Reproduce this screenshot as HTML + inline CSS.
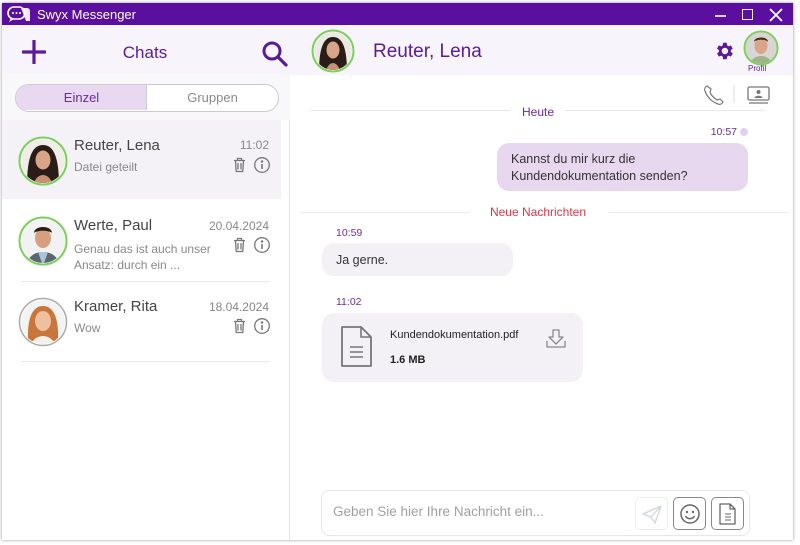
<!DOCTYPE html>
<html><head><meta charset="utf-8"><style>
*{margin:0;padding:0;box-sizing:border-box}
body{width:800px;height:545px;background:#fff;font-family:"Liberation Sans",sans-serif;position:relative;overflow:hidden}
.a{position:absolute}
.win{left:2px;top:3px;width:791px;height:537px;background:#fff;box-shadow:0 0 3px rgba(0,0,0,.45);overflow:hidden}
.t{white-space:nowrap}
</style></head><body>
<div class="a win">
 <div class="a" style="left:0;top:0;width:791px;height:22px;background:#5b0f9f"></div>
 <svg class="a" style="left:5px;top:3px" width="24" height="17" viewBox="0 0 24 17"><path d="M14 2h6a3 3 0 0 1 3 3v10h-4z" fill="#fff" opacity=".9"/><rect x="1" y="1" width="17" height="12" rx="6" fill="none" stroke="#fff" stroke-width="1.6"/><path d="M4 12l-2 4 5-3" fill="#fff"/><circle cx="6" cy="7" r="1" fill="#fff"/><circle cx="9.5" cy="7" r="1" fill="#fff"/><circle cx="13" cy="7" r="1" fill="#fff"/></svg>
 <div class="a t" style="left:35px;top:4px;color:#fff;font-size:13px">Swyx Messenger</div>
 <div class="a" style="left:713px;top:12px;width:11px;height:1.5px;background:#fff;opacity:.8"></div>
 <div class="a" style="left:740px;top:6px;width:11px;height:11px;border:1.5px solid #fff;opacity:.9"></div>
 <svg class="a" style="left:767px;top:5px" width="14" height="14"><path d="M1 1L13 13M13 1L1 13" stroke="#fff" stroke-width="1.8"/></svg>
 <!-- header -->
 <div class="a" style="left:0;top:22px;width:791px;height:50px;background:#f8f4fc"></div>
 <svg class="a" style="left:20px;top:37px" width="24" height="24"><path d="M12 1V23M1 12H23" stroke="#5a1a9a" stroke-width="3.2" stroke-linecap="round"/></svg>
 <div class="a t" style="left:100px;top:40px;width:86px;text-align:center;color:#5a1a9a;font-size:17px">Chats</div>
 <svg class="a" style="left:259px;top:37px" width="28" height="28"><circle cx="11" cy="11" r="8" fill="none" stroke="#5a1a9a" stroke-width="3"/><path d="M17 17L25 25" stroke="#5a1a9a" stroke-width="3.2" stroke-linecap="round"/></svg>
 <svg class="a" style="left:309px;top:26px" width="44" height="44"><defs><clipPath id="c1"><circle cx="22" cy="22" r="19"/></clipPath></defs><circle cx="22" cy="22" r="20.5" fill="#fff" stroke="#7ccf5a" stroke-width="2"/><g clip-path="url(#c1)"><rect width="44" height="44" fill="#ede9e4"/><path d="M8 44C8 20 12 8 22 8S36 20 36 44Z" fill="#2a1d18"/><ellipse cx="22" cy="21" rx="6.5" ry="8.5" fill="#d9a58a"/><path d="M14 44c2-8 6-10 8-10s6 2 8 10z" fill="#c98f75"/></g></svg>
 <div class="a t" style="left:371px;top:38px;color:#5a1a9a;font-size:19px">Reuter, Lena</div>
 <svg class="a" style="left:711px;top:37px" width="22" height="22" viewBox="0 0 24 24"><path fill="#5a1a9a" d="M19.4 13a7.5 7.5 0 0 0 0-2l2.1-1.6-2-3.5-2.5 1a7 7 0 0 0-1.7-1L15 3h-4l-.4 2.9a7 7 0 0 0-1.7 1l-2.5-1-2 3.5L6.5 11a7.5 7.5 0 0 0 0 2l-2.1 1.6 2 3.5 2.5-1a7 7 0 0 0 1.7 1L11 21h4l.4-2.9a7 7 0 0 0 1.7-1l2.5 1 2-3.5zM13 15.5a3.5 3.5 0 1 1 0-7 3.5 3.5 0 0 1 0 7z"/></svg>
 <svg class="a" style="left:741px;top:27px" width="36" height="36"><defs><clipPath id="c2"><circle cx="18" cy="18" r="15.5"/></clipPath></defs><circle cx="18" cy="18" r="16.5" fill="#fff" stroke="#7ccf5a" stroke-width="2"/><g clip-path="url(#c2)"><rect width="36" height="36" fill="#d8d5d2"/><ellipse cx="18" cy="16" rx="6.5" ry="8" fill="#d9a488"/><path d="M11 12c0-6 14-6 14 0-2-3-12-3-14 0z" fill="#4a2c1e"/><path d="M6 36c2-8 8-10 12-10s10 2 12 10z" fill="#9fb489"/></g></svg>
 <div class="a t" style="left:746px;top:61px;color:#5a1a9a;font-size:8px">Profil</div>
 <!-- left panel -->
 <div class="a" style="left:0;top:72px;width:288px;height:465px;background:#fff;border-right:1px solid #e6e4ea"></div>
 <div class="a" style="left:0;top:72px;width:288px;height:45px;background:#f8f7fa"></div>
 <div class="a" style="left:13px;top:81px;width:264px;height:28px;border:1.5px solid #ccc9d2;border-radius:14px;background:#fff;overflow:hidden">
  <div class="a" style="left:0;top:0;width:131px;height:25px;background:#e8d9f0;border-right:1px solid #ccc9d2"></div>
  <div class="a t" style="left:0;top:5px;width:131px;text-align:center;color:#6a2aa6;font-size:13px">Einzel</div>
  <div class="a t" style="left:131px;top:5px;width:131px;text-align:center;color:#8a8a8a;font-size:13px">Gruppen</div>
 </div>
 <div class="a" style="left:0;top:117px;width:279px;height:79px;background:#f4f2f6"></div>
 <!-- items -->
 <svg class="a" style="left:16px;top:133px" width="50" height="50"><defs><clipPath id="c3"><circle cx="25" cy="25" r="22"/></clipPath></defs><circle cx="25" cy="25" r="23.5" fill="#fff" stroke="#7ccf5a" stroke-width="2"/><g clip-path="url(#c3)"><rect width="50" height="50" fill="#f0ece8"/><path d="M9 50C9 22 14 9 25 9S41 22 41 50Z" fill="#2a1d18"/><ellipse cx="25" cy="24" rx="7.5" ry="9.5" fill="#d9a58a"/><path d="M15 50c2-9 7-11 10-11s8 2 10 11z" fill="#c98f75"/></g></svg>
 <div class="a t" style="left:72px;top:134px;color:#444;font-size:15px">Reuter, Lena</div>
 <div class="a t" style="left:220px;top:135px;width:47px;text-align:right;color:#888;font-size:12px">11:02</div>
 <div class="a t" style="left:72px;top:157px;color:#888;font-size:12px">Datei geteilt</div>

 <svg class="a" style="left:16px;top:213px" width="50" height="50"><defs><clipPath id="c4"><circle cx="25" cy="25" r="22"/></clipPath></defs><circle cx="25" cy="25" r="23.5" fill="#fff" stroke="#7ccf5a" stroke-width="2"/><g clip-path="url(#c4)"><rect width="50" height="50" fill="#f2f2f2"/><ellipse cx="25" cy="22" rx="8" ry="10" fill="#d6a080"/><path d="M16 17c0-8 18-8 18 0-3-3-15-3-18 0z" fill="#2a1d15"/><path d="M8 50c2-10 9-14 17-14s15 4 17 14z" fill="#5c6670"/><path d="M20 36l5 14 5-14z" fill="#a9c4d8"/></g></svg>
 <div class="a t" style="left:72px;top:214px;color:#444;font-size:15px">Werte, Paul</div>
 <div class="a t" style="left:200px;top:216px;width:67px;text-align:right;color:#888;font-size:12px">20.04.2024</div>
 <div class="a t" style="left:72px;top:238px;color:#888;font-size:12px;line-height:16px">Genau das ist auch unser<br>Ansatz: durch ein ...</div>
 <div class="a" style="left:19px;top:278px;width:249px;height:1px;background:#ebe9ee"></div>

 <svg class="a" style="left:16px;top:294px" width="50" height="50"><defs><clipPath id="c5"><circle cx="25" cy="25" r="22"/></clipPath></defs><circle cx="25" cy="25" r="23.5" fill="#fff" stroke="#aaa" stroke-width="1.5"/><g clip-path="url(#c5)"><rect width="50" height="50" fill="#f5f3f1"/><path d="M10 44C9 20 15 9 25 9S41 20 40 44Z" fill="#c9763a"/><ellipse cx="25" cy="24" rx="8" ry="10" fill="#eec0a0"/><path d="M12 50c2-8 8-11 13-11s11 3 13 11z" fill="#f4f0ec"/></g></svg>
 <div class="a t" style="left:72px;top:295px;color:#444;font-size:15px">Kramer, Rita</div>
 <div class="a t" style="left:200px;top:297px;width:67px;text-align:right;color:#888;font-size:12px">18.04.2024</div>
 <div class="a t" style="left:72px;top:318px;color:#888;font-size:12px">Wow</div>
 <div class="a" style="left:19px;top:358px;width:249px;height:1px;background:#ebe9ee"></div>

 <!-- trash/info icons -->
 <svg class="a" style="left:230px;top:154px" width="40" height="196">
  <g id="ic" fill="none" stroke="#777" stroke-width="1.3">
   <path d="M2 3.5h11M5.5 3.5V1.5h4v2M3.5 3.5l.7 11h6.6l.7-11M6 6v6.5M9 6v6.5"/>
   <circle cx="30" cy="8" r="7.3"/><path d="M30 7v5" stroke-width="1.6"/><circle cx="30" cy="4.5" r=".6" fill="#777"/>
  </g>
  <use href="#ic" y="80"/><use href="#ic" y="161"/>
 </svg>
 <!-- right panel -->
 <svg class="a" style="left:700px;top:80px" width="72" height="24"><path d="M5 3c-2 1-3 3-2 5 2 6 7 11 13 13 2 1 4 0 5-2l-3-3-3 1c-3-2-6-5-7-8l1-3z" fill="none" stroke="#777" stroke-width="1.2"/><path d="M32 2v18" stroke="#ddd"/><rect x="46" y="4" width="21" height="13" rx="1.5" fill="none" stroke="#777" stroke-width="1.3"/><circle cx="56.5" cy="9" r="2" fill="#777"/><path d="M52.5 15c0-3 8-3 8 0z" fill="#777"/><path d="M47 20h19" stroke="#777" stroke-width="1.2"/></svg>
 <div class="a" style="left:308px;top:107px;width:200px;height:1px;background:#e8e8ec"></div>
 <div class="a" style="left:563px;top:107px;width:200px;height:1px;background:#e8e8ec"></div>
 <div class="a t" style="left:500px;top:102px;width:72px;text-align:center;color:#6a2aa6;font-size:12px">Heute</div>
 <div class="a t" style="left:700px;top:123px;width:35px;text-align:right;color:#6a2aa6;font-size:10.5px">10:57</div>
 <div class="a" style="left:738px;top:125px;width:8px;height:8px;border-radius:50%;background:#e0d2ec"></div>
 <div class="a" style="left:495px;top:140px;width:251px;height:48px;border-radius:12px;background:#e7d8f0"></div>
 <div class="a t" style="left:509px;top:148px;color:#333;font-size:12.5px;line-height:17px">Kannst du mir kurz die<br>Kundendokumentation senden?</div>
 <div class="a" style="left:298px;top:209px;width:170px;height:1px;background:#ececef"></div>
 <div class="a" style="left:607px;top:209px;width:180px;height:1px;background:#ececef"></div>
 <div class="a t" style="left:466px;top:202px;width:140px;text-align:center;color:#e03444;font-size:12px">Neue Nachrichten</div>
 <div class="a t" style="left:334px;top:224px;color:#6a2aa6;font-size:10.5px">10:59</div>
 <div class="a" style="left:320px;top:240px;width:191px;height:33px;border-radius:12px;background:#f3f1f6"></div>
 <div class="a t" style="left:334px;top:250px;color:#333;font-size:12.5px">Ja gerne.</div>
 <div class="a t" style="left:334px;top:293px;color:#6a2aa6;font-size:10.5px">11:02</div>
 <div class="a" style="left:320px;top:310px;width:261px;height:69px;border-radius:12px;background:#f3f1f6"></div>
 <svg class="a" style="left:338px;top:322px" width="34" height="44"><path d="M2 2h19l10 10v29H2z" fill="none" stroke="#777" stroke-width="1.8" stroke-linejoin="round"/><path d="M21 2v10h10" fill="none" stroke="#777" stroke-width="1.6"/><path d="M10 22h13M10 27h13M10 32h13" stroke="#777" stroke-width="1.6"/></svg>
 <div class="a t" style="left:388px;top:326px;color:#222;font-size:11px">Kundendokumentation.pdf</div>
 <div class="a t" style="left:388px;top:351px;color:#222;font-size:11px;font-weight:bold">1.6 MB</div>
 <svg class="a" style="left:544px;top:326px" width="22" height="20"><path d="M7 1h6v7h4l-7 7-7-7h4z M1 12v6h18v-6" fill="none" stroke="#888" stroke-width="1.3" stroke-linejoin="round"/></svg>
 <!-- input -->
 <div class="a" style="left:319px;top:487px;width:429px;height:46px;border:1px solid #e4e8ee;border-radius:8px;background:#fff"></div>
 <div class="a t" style="left:331px;top:501px;color:#a0a0a0;font-size:13.5px">Geben Sie hier Ihre Nachricht ein...</div>
 <div class="a" style="left:633px;top:494px;width:33px;height:33px;border:1px solid #eceef0;border-radius:5px"></div>
 <svg class="a" style="left:639px;top:500px" width="22" height="22"><path d="M2 11L20 3l-6 17-4-6z M10 14L20 3" fill="none" stroke="#cfd6dc" stroke-width="1.3" stroke-linejoin="round"/></svg>
 <div class="a" style="left:671px;top:494px;width:33px;height:33px;border:1.3px solid #888;border-radius:5px"></div>
 <svg class="a" style="left:677px;top:500px" width="22" height="22"><circle cx="11" cy="11" r="9" fill="none" stroke="#666" stroke-width="1.5"/><circle cx="8" cy="9" r="1.2" fill="#666"/><circle cx="14" cy="9" r="1.2" fill="#666"/><path d="M6.5 13c2 3.5 7 3.5 9 0" fill="none" stroke="#666" stroke-width="1.5"/></svg>
 <div class="a" style="left:709px;top:494px;width:33px;height:33px;border:1.3px solid #888;border-radius:5px"></div>
 <svg class="a" style="left:716px;top:499px" width="20" height="24"><path d="M2 2h10l5 5v15H2z M12 2v5h5" fill="none" stroke="#666" stroke-width="1.3" stroke-linejoin="round"/><path d="M7 12h6M7 15h6M7 18h6" stroke="#666" stroke-width="1"/></svg>
</div>
</body></html>
